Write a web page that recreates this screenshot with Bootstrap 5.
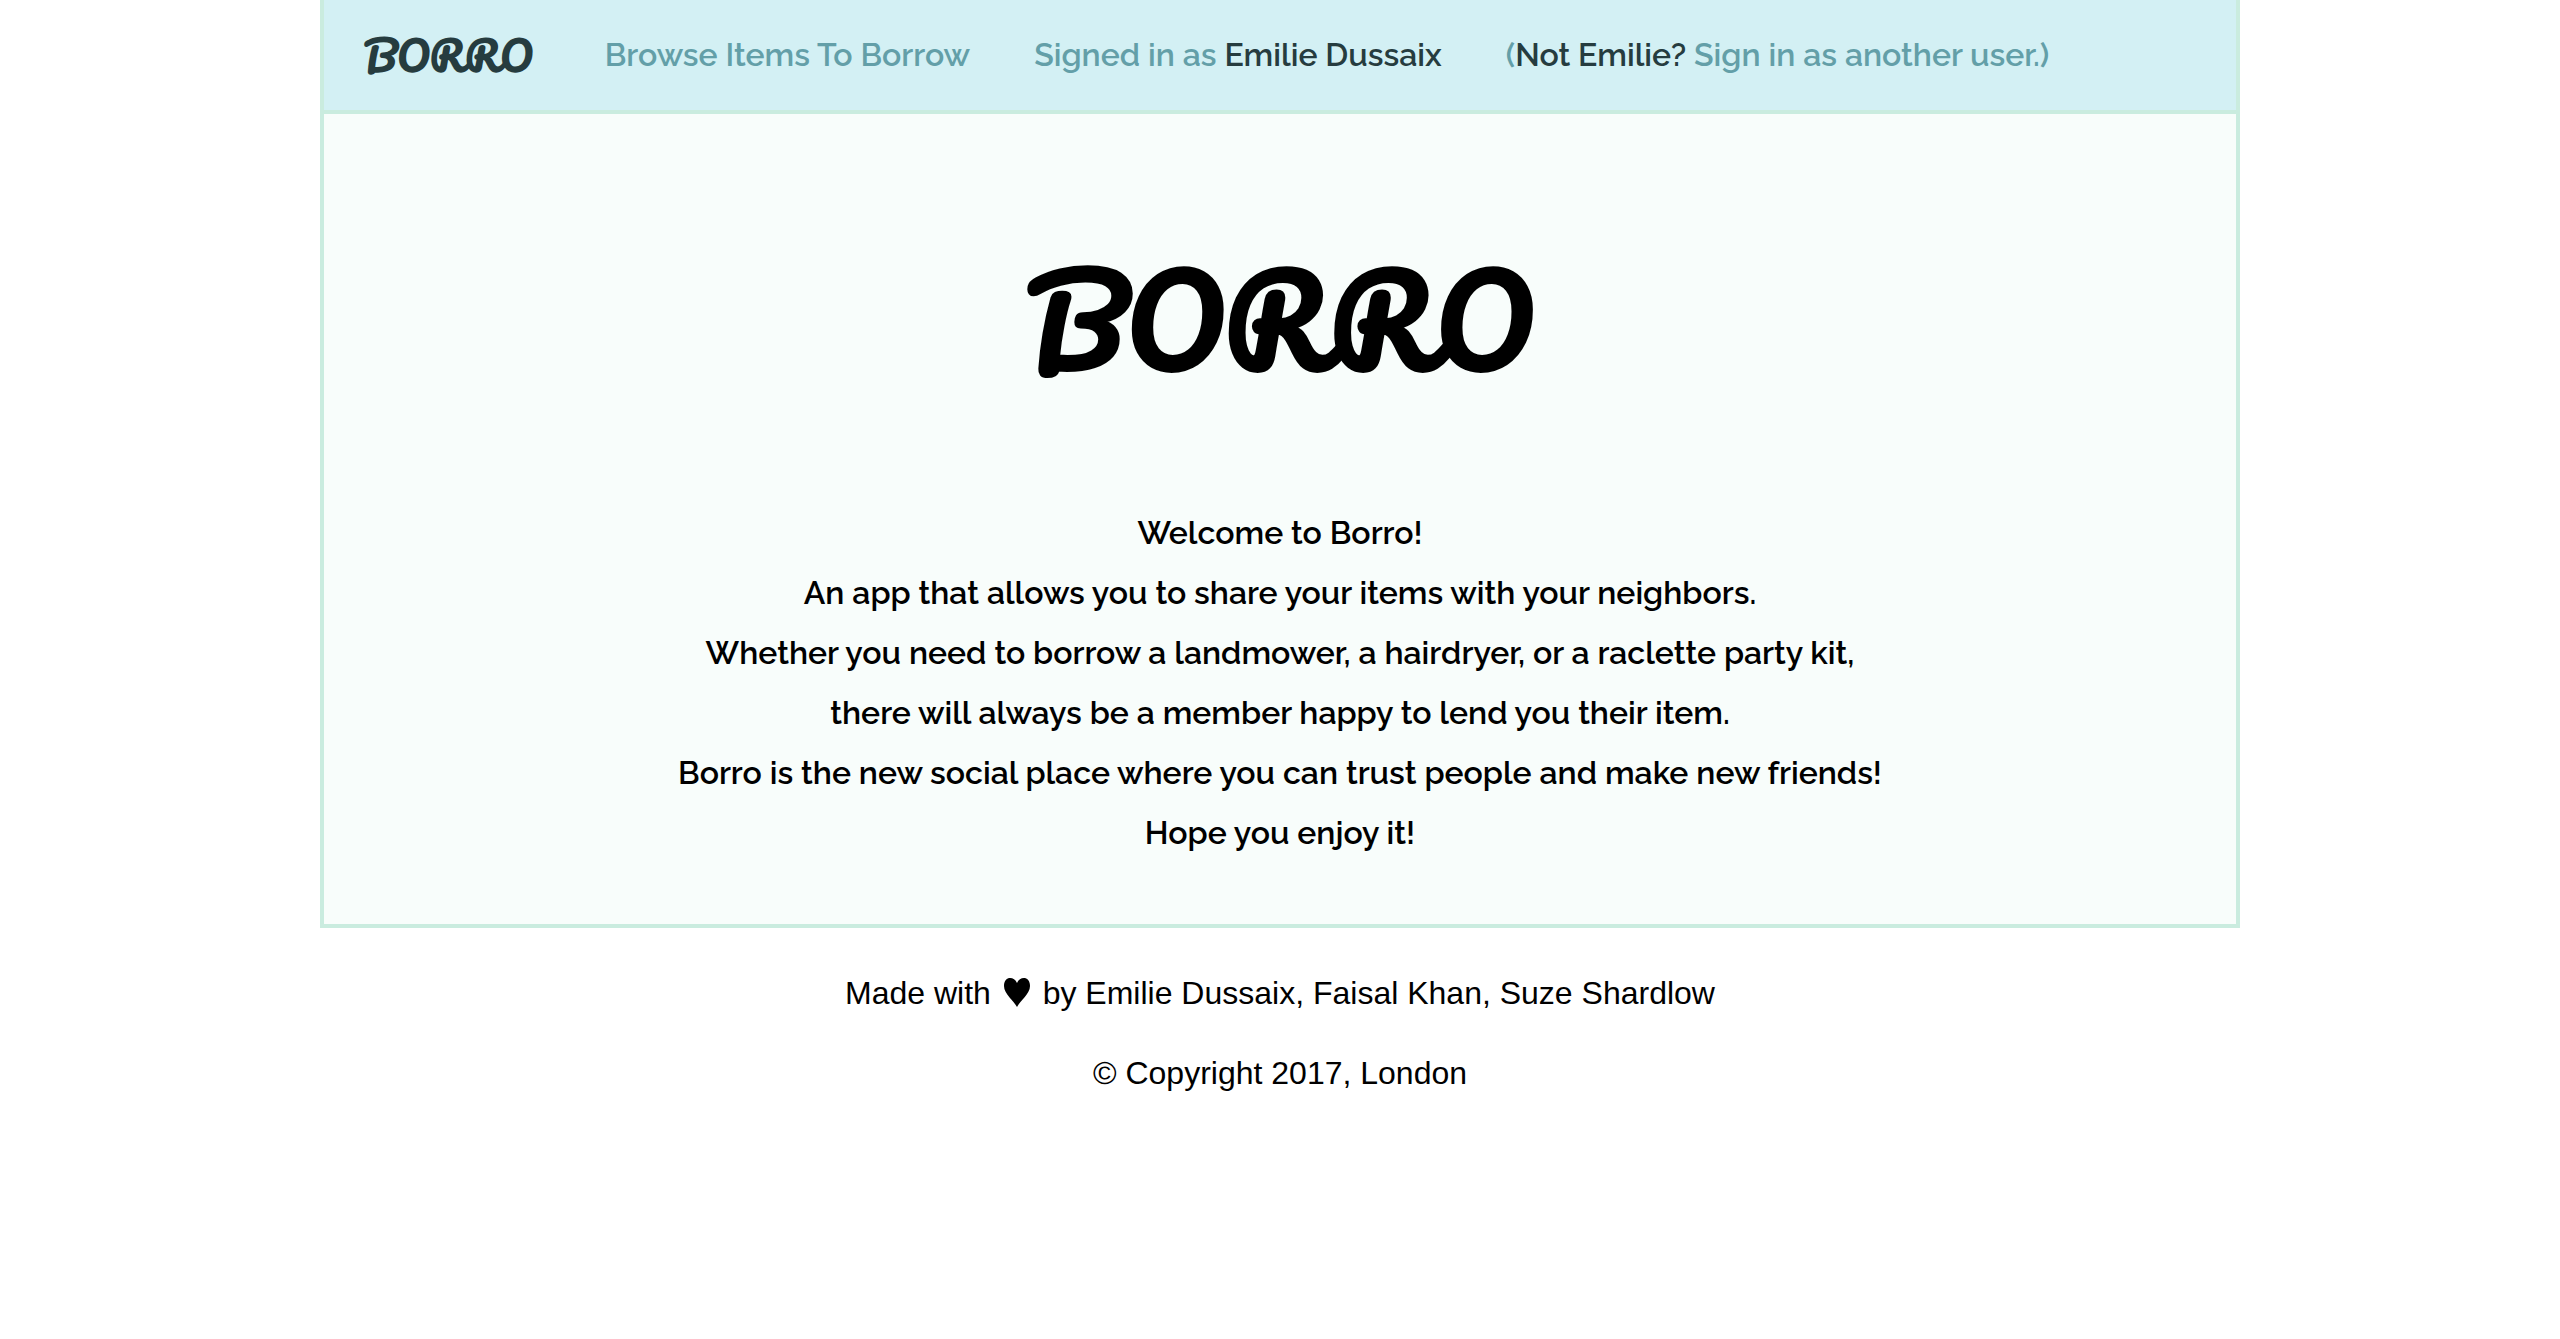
<!DOCTYPE html>
<html lang="en">
<head>
<meta charset="utf-8">
<meta name="viewport" content="width=device-width, initial-scale=1">
<title>Borro</title>
<link href="https://cdn.jsdelivr.net/npm/bootstrap@5.3.0/dist/css/bootstrap.min.css" rel="stylesheet">
<style>
  body { background: #fff; color: #000; font: 32px/40px "Liberation Sans", Arial, sans-serif; }
  .site-nav, .welcome { font-family: Raleway, Lato, sans-serif; font-weight: 600; border: 4px solid #caecdf; }
  .site-nav { background: #d3f0f4; border-top: 0; padding: 0 40px; min-height: 114px; line-height: 50px; column-gap: 64px; }
  .site-nav a { color: #639fa8; text-decoration: none; }
  .site-nav strong { color: #263c3f; font-weight: inherit; }
  .wordmark { font-family: Pacifico, Lato, cursive; font-weight: 700; }
  .site-nav .wordmark { color: #263c3f; font-size: 40px; margin-right: 8px; }
  .welcome { background: #f8fdfb; border-top: 0; line-height: 60px; padding: 125px 40px 61px; }
  .welcome h1 { font-size: 120px; line-height: 160px; margin: 0 0 104px; }
  .heart { width: 26px; height: 29px; margin: 0 4px 4px; vertical-align: text-bottom; }
  .site-footer { padding-top: 45px; row-gap: 40px; }
</style>
</head>
<body>
<div class="w-75 mx-auto">
  <nav class="site-nav d-flex flex-wrap align-items-center">
    <a class="wordmark" href="#">BORRO</a>
    <a href="#">Browse Items To Borrow</a>
    <a href="#">Signed in as <strong>Emilie Dussaix</strong></a>
    <a href="#">(<strong>Not Emilie?</strong> Sign in as another user.)</a>
  </nav>
  <main class="welcome text-center">
    <h1 class="wordmark">BORRO</h1>
    <p class="m-0">Welcome to Borro!<br>
      An app that allows you to share your items with your neighbors.<br>
      Whether you need to borrow a landmower, a hairdryer, or a raclette party kit,<br>
      there will always be a member happy to lend you their item.<br>
      Borro is the new social place where you can trust people and make new friends!<br>
      Hope you enjoy it!</p>
  </main>
  <footer class="site-footer d-flex flex-column text-center">
    <p class="m-0">Made with <svg class="heart" viewBox="0 0 26 29" role="img" aria-label="love"><path d="M13 29C10 23 0 16 0 8C0-2 10-2 13 5C16-2 26-2 26 8C26 16 16 23 13 29Z"/></svg> by Emilie Dussaix, Faisal Khan, Suze Shardlow</p>
    <p class="m-0">© Copyright 2017, London</p>
  </footer>
</div>
<script src="https://cdn.jsdelivr.net/npm/bootstrap@5.3.0/dist/js/bootstrap.bundle.min.js"></script>
</body>
</html>
